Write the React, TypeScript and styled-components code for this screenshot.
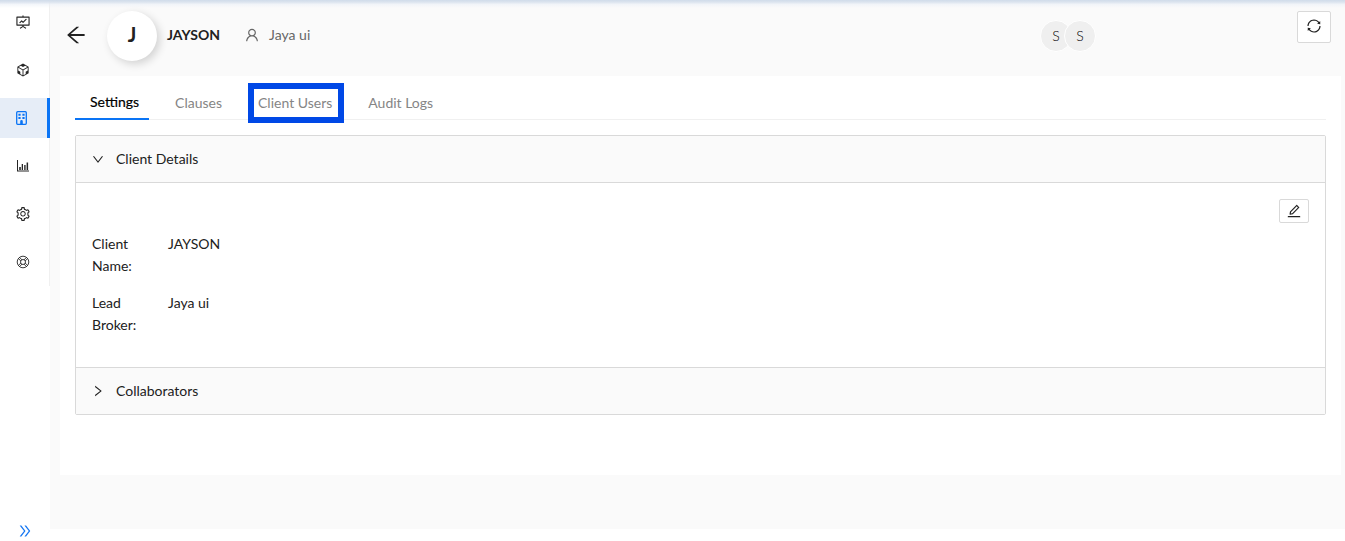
import React, { useState } from "react";
import styled, { createGlobalStyle, css } from "styled-components";
import {
  AiOutlineArrowLeft,
  AiOutlineCodeSandbox,
  AiOutlineDoubleRight,
  AiOutlineEdit,
  AiOutlineFundProjectionScreen,
  AiOutlineRight,
  AiOutlineSetting,
  AiOutlineSync,
  AiOutlineUser,
} from "react-icons/ai";

const GlobalStyle = createGlobalStyle`
  *, *::before, *::after { box-sizing: border-box; }
  body {
    margin: 0;
    background: #fff;
    color: #212121;
    font: 14px/22px Lato, "Open Sans", sans-serif;
  }
  button { font: inherit; color: inherit; cursor: pointer; }
  svg { display: block; flex: none; }
`;

const Page = styled.div`
  position: relative;
  display: flex;
  min-height: 100vh;
`;

const TopShade = styled.div`
  position: absolute;
  inset: 0 0 auto;
  height: 8px;
  background: linear-gradient(#d0dcea, rgba(216, 225, 237, 0.9) 25%, rgba(235, 240, 247, 0.6) 55%, rgba(250, 250, 250, 0));
  pointer-events: none;
`;

const Sidebar = styled.aside`
  flex: none;
  width: 50px;
  display: flex;
  flex-direction: column;
  justify-content: space-between;
`;

const Menu = styled.nav`
  display: flex;
  flex-direction: column;
  gap: 8px;
  padding: 2px 0 4px;
  box-shadow: inset -1px 0 #f0f0f0;
`;

const MenuLink = styled.a<{ $active?: boolean }>`
  display: flex;
  align-items: center;
  height: 40px;
  padding-left: 15px;
  color: #262626;
  ${(p) =>
    p.$active &&
    css`
      color: #0a74f5;
      background: #e6edf7;
      border-right: 3px solid #0a74f5;
    `}
`;

const ExpandButton = styled.button`
  display: flex;
  justify-content: center;
  padding: 2px 0;
  border: 0;
  background: none;
  color: #1677f2;
`;

const Main = styled.main`
  flex: 1;
  min-width: 0;
  margin-bottom: 12px;
  padding: 0 4px 0 10px;
  background: #fafafa;
`;

const Header = styled.header`
  display: flex;
  align-items: center;
  height: 76px;
  padding: 0 10px 4px 4px;
`;

const BackButton = styled.button`
  display: flex;
  padding: 0 0 3px;
  border: 0;
  background: none;
`;

const ClientAvatar = styled.div`
  display: grid;
  place-items: center;
  width: 50px;
  height: 50px;
  margin: 0 10px 0 19px;
  padding-bottom: 4px;
  border-radius: 50%;
  background: #fff;
  box-shadow: 3px 3px 8px rgba(0, 0, 0, 0.16);
  font-size: 20px;
  font-weight: 700;
`;

const ClientName = styled.h1`
  margin: 0;
  padding-bottom: 2px;
  font-size: 14px;
  font-weight: 700;
`;

const Owner = styled.div`
  display: flex;
  align-items: center;
  gap: 9px;
  margin-left: 24px;
  padding-bottom: 2px;
  color: #666;
`;

const Members = styled.div`
  display: flex;
  margin: 0 201px 0 auto;
`;

const Member = styled.span`
  display: grid;
  place-items: center;
  width: 32px;
  height: 32px;
  border: 1px solid #fff;
  border-radius: 50%;
  background: #efefef;
  color: #000;
  font-weight: 300;

  & + & {
    margin-left: -8px;
  }
`;

const IconButton = styled.button<{ $small?: boolean }>`
  display: grid;
  place-items: center;
  width: ${(p) => (p.$small ? 30 : 34)}px;
  height: ${(p) => (p.$small ? 24 : 32)}px;
  padding: 0;
  border: 1px solid #d9d9d9;
  border-radius: 2px;
  background: #fff;
`;

const RefreshButton = styled(IconButton)`
  align-self: flex-start;
  margin-top: 11px;
  padding-bottom: 2px;
`;

const Panel = styled.section`
  min-height: 399px;
  padding: 10px 15px 60px;
  background: #fff;
`;

const Tabs = styled.div`
  display: flex;
  gap: 11px;
  margin-bottom: 15px;
  box-shadow: inset 0 -1px #f0f0f0;
`;

const Tab = styled.button<{ $active: boolean; $marked?: boolean }>`
  position: relative;
  height: 34px;
  padding: 0 10px 0 15px;
  border: 0;
  background: none;
  color: #858585;
  ${(p) =>
    p.$active &&
    css`
      color: #000;
      border-bottom: 2px solid #0a74f5;
      -webkit-text-stroke: 0.2px;
    `}
  ${(p) =>
    p.$marked &&
    css`
      &::after {
        content: "";
        position: absolute;
        inset: -3px -2px -3px 5px;
        border: 6px solid #0048e6;
      }
    `}
`;

const Collapse = styled.div`
  border: 1px solid #d9d9d9;
  border-radius: 2px;
`;

const CollapseHeader = styled.button<{ $open: boolean }>`
  display: flex;
  align-items: center;
  gap: 11px;
  width: 100%;
  padding: 12px 15px;
  border: 0;
  background: #fafafa;
  text-align: left;

  svg {
    transform: ${(p) => (p.$open ? "rotate(90deg)" : "none")};
  }
`;

const CollapseBody = styled.div`
  display: flex;
  flex-direction: column;
  padding: 16px 16px 31px;
  border-top: 1px solid #d9d9d9;
`;

const CollapseItem = styled.div`
  & + & {
    border-top: 1px solid #d9d9d9;
  }
`;

const EditButton = styled(IconButton)`
  align-self: flex-end;
  margin-bottom: 10px;
`;

const Details = styled.dl`
  display: grid;
  grid-template-columns: 60px 1fr;
  gap: 15px 16px;
  margin: 0;

  dd {
    margin: 0;
  }
`;

const BarsIcon = () => (
  <svg width="16" height="16" viewBox="0 0 16 16" fill="currentColor">
    <path d="M2 2h1v11h-1zM2 12.5h12v1h-12zM4.2 9h1.6v3h-1.6zM6.7 6h1.3v6h-1.3zM9.2 7h1.4v5h-1.4zM11.6 4.5h1.5v7.5h-1.5z" />
  </svg>
);

const BuildingIcon = () => (
  <svg width="14" height="16" viewBox="0 0 14 16" fill="currentColor">
    <rect x="1.7" y="1.7" width="9.6" height="12.6" rx="1" fill="none" stroke="currentColor" strokeWidth="1.3" />
    <path d="M3.4 3.8h2.2v1.9h-2.2zM7.4 3.8h2.2v1.9h-2.2zM3.4 7h2.2v1.9h-2.2zM7.4 7h2.2v1.9h-2.2zM5.2 14v-2.6a1.3 1.3 0 0 1 2.6 0v2.6z" />
  </svg>
);

const SupportIcon = () => (
  <svg width="16" height="16" viewBox="0 0 16 16" fill="none" stroke="currentColor" strokeWidth="0.9">
    <circle cx="8" cy="8" r="5.8" />
    <circle cx="8" cy="8" r="2.5" />
    <path d="M3.3 4.6l2.5 2.2M4.6 3.3l2.2 2.5M12.7 4.6l-2.5 2.2M11.4 3.3l-2.2 2.5M3.3 11.4l2.5-2.2M4.6 12.7l2.2-2.5M12.7 11.4l-2.5-2.2M11.4 12.7l-2.2-2.5" />
  </svg>
);

const menu = [
  { label: "Dashboard", icon: <AiOutlineFundProjectionScreen size={16} /> },
  { label: "Products", icon: <AiOutlineCodeSandbox size={16} /> },
  { label: "Clients", icon: <BuildingIcon />, active: true },
  { label: "Reports", icon: <BarsIcon /> },
  { label: "Settings", icon: <AiOutlineSetting size={16} /> },
  { label: "Support", icon: <SupportIcon /> },
];

const tabs = ["Settings", "Clauses", "Client Users", "Audit Logs"];

export default function App() {
  const [tab, setTab] = useState("Settings");
  const [detailsOpen, setDetailsOpen] = useState(true);

  return (
    <Page>
      <GlobalStyle />
      <Sidebar>
        <Menu aria-label="Main">
          {menu.map((item) => (
            <MenuLink key={item.label} href="#" aria-label={item.label} $active={item.active}>
              {item.icon}
            </MenuLink>
          ))}
        </Menu>
        <ExpandButton aria-label="Expand menu">
          <AiOutlineDoubleRight size={16} />
        </ExpandButton>
      </Sidebar>
      <Main>
        <Header>
          <BackButton aria-label="Back">
            <AiOutlineArrowLeft size={24} />
          </BackButton>
          <ClientAvatar>J</ClientAvatar>
          <ClientName>JAYSON</ClientName>
          <Owner>
            <AiOutlineUser size={16} />
            Jaya ui
          </Owner>
          <Members>
            <Member>S</Member>
            <Member>S</Member>
          </Members>
          <RefreshButton aria-label="Refresh">
            <AiOutlineSync size={16} />
          </RefreshButton>
        </Header>
        <Panel>
          <Tabs role="tablist">
            {tabs.map((name) => (
              <Tab
                key={name}
                role="tab"
                aria-selected={tab === name}
                $active={tab === name}
                $marked={name === "Client Users"}
                onClick={() => setTab(name)}
              >
                {name}
              </Tab>
            ))}
          </Tabs>
          <Collapse>
            <CollapseItem>
              <CollapseHeader
                $open={detailsOpen}
                aria-expanded={detailsOpen}
                onClick={() => setDetailsOpen(!detailsOpen)}
              >
                <AiOutlineRight size={14} />
                Client Details
              </CollapseHeader>
              {detailsOpen && (
                <CollapseBody>
                  <EditButton $small aria-label="Edit client details">
                    <AiOutlineEdit size={16} />
                  </EditButton>
                  <Details>
                    <dt>Client Name:</dt>
                    <dd>JAYSON</dd>
                    <dt>Lead Broker:</dt>
                    <dd>Jaya ui</dd>
                  </Details>
                </CollapseBody>
              )}
            </CollapseItem>
            <CollapseItem>
              <CollapseHeader $open={false} aria-expanded={false}>
                <AiOutlineRight size={14} />
                Collaborators
              </CollapseHeader>
            </CollapseItem>
          </Collapse>
        </Panel>
      </Main>
      <TopShade />
    </Page>
  );
}
